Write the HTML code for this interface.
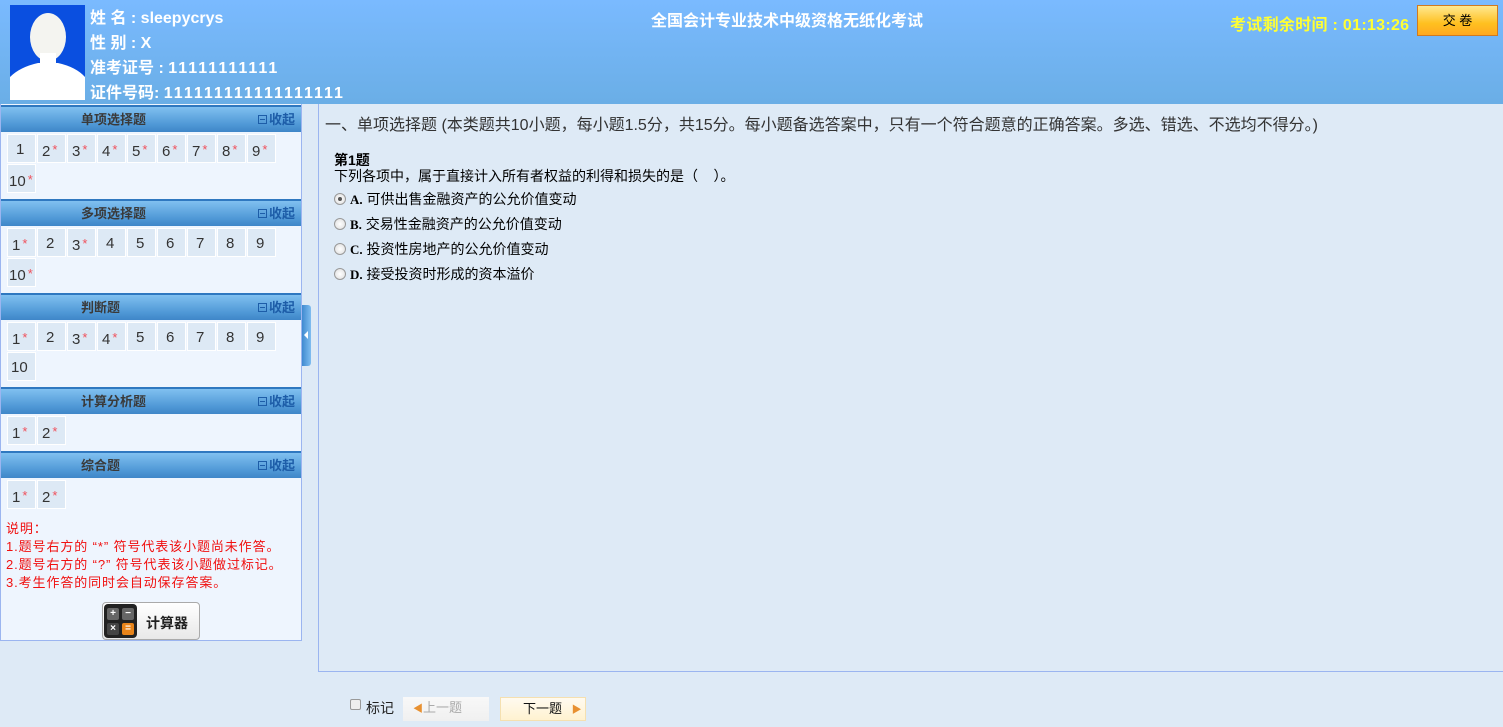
<!DOCTYPE html>
<html><head><meta charset="utf-8"><style>
*{margin:0;padding:0;box-sizing:border-box}
body{width:1503px;height:727px;overflow:hidden;background:#deeaf6;font-family:"Liberation Sans","Noto Sans CJK SC",sans-serif;position:relative;color:#333}
.hdr{position:absolute;left:0;top:0;width:1503px;height:104px;background:linear-gradient(#7abaff,#6aaee6)}
.photo{position:absolute;left:10px;top:5px;width:75px;height:95px;background:#0a4fe0;overflow:hidden}
.info{position:absolute;left:90px;color:#fff;font-weight:bold;font-size:16px;line-height:25px;top:6px}
.info .d{letter-spacing:2px}
.title{position:absolute;left:651px;top:7px;color:#fff;font-weight:bold;font-size:16px}
.timer{position:absolute;left:1230px;top:11px;color:#ffff33;font-weight:bold;font-size:16px;letter-spacing:0.3px}
.btn{position:absolute;left:1417px;top:5px;width:81px;height:31px;border:1px solid #d07a20;background:linear-gradient(#ffe890,#ffc020 60%,#ffa820);font-size:13px;text-align:center;line-height:29px;color:#000}
.left{position:absolute;left:0;top:104px;width:302px;height:537px;background:#eef5fe;border:1px solid #9bb5f0;border-top:none}
.sh{position:absolute;left:0;width:300px;height:27px;background:linear-gradient(#80c0f0,#4f98d6 70%,#3f86c8);border-top:2px solid #2f78c0;font-weight:bold;font-size:13px;color:#3a3a3a;line-height:25px}
.sh .t{position:absolute;left:80px}
.sh .c{position:absolute;right:6px;color:#1d5da8;font-size:13px}
.sh .c i{display:inline-block;width:9px;height:9px;border:1px solid #1d5da8;margin-right:2px;vertical-align:0;position:relative;font-style:normal}
.sh .c i:after{content:"";position:absolute;left:1px;top:3px;width:5px;height:1px;background:#1d5da8}
.it{position:absolute;width:29px;height:29px;background:#dde9f5;border:1px solid #fff;font-size:15px;line-height:29px;padding-left:4px;color:#333}
.it b{color:#f0505a;font-weight:normal;font-size:13px;margin-left:2px;vertical-align:2px}
.note{position:absolute;left:6px;top:520px;color:#f01010;font-size:13px;line-height:18px;letter-spacing:0.9px}
.calc{position:absolute;left:102px;top:602px;width:98px;height:38px;border:1px solid #aaa;border-radius:4px;background:linear-gradient(#fff,#e8e8e8);font-size:14px;font-weight:bold;color:#222}
.calc .k{position:absolute;left:1px;top:1px;width:33px;height:34px;background:#222;border-radius:4px}
.calc .k span{position:absolute;width:12px;height:12px;background:#666;border-radius:2px;color:#fff;font-size:10px;line-height:12px;text-align:center}
.tog{position:absolute;left:302px;top:305px;width:9px;height:61px;background:linear-gradient(90deg,#3f8ad0,#7fbdf0);border-radius:0 3px 3px 0}
.tog:after{content:"";position:absolute;left:2px;top:26px;border:4px solid transparent;border-right:4px solid #fff;border-left:none}
.main{position:absolute;left:318px;top:104px;width:1190px;height:568px;border-left:1px solid #9bb5f0;border-bottom:1px solid #9bb5f0}
.q1{position:absolute;left:6px;top:7px;font-size:16px;color:#333}
.qn{position:absolute;left:15px;top:46px;font-size:14px;font-weight:bold;color:#000}
.qt{position:absolute;left:15px;top:62px;font-size:14px;color:#000}
.op{position:absolute;left:15px;font-size:14px;color:#000}
.op .r{display:inline-block;width:12px;height:12px;border-radius:50%;border:1px solid #999;background:radial-gradient(#fff,#ddd);vertical-align:-1px;margin-right:4px;position:relative}
.op .r.s:after{content:"";position:absolute;left:3px;top:3px;width:4px;height:4px;border-radius:50%;background:#555}
.op b{font-family:"Liberation Serif",serif;font-size:13px}
.bot{position:absolute;top:696px;font-size:14px;color:#222}
</style></head><body>
<div class="hdr">
 <div class="photo"><svg width="75" height="95"><ellipse cx="38" cy="32" rx="18" ry="24" fill="#f4f4f0"/><path d="M0 95 L0 72 Q10 62 28 58 L48 58 Q66 62 75 72 L75 95Z" fill="#fff"/><rect x="30" y="48" width="16" height="14" fill="#fff"/></svg></div>
 <div class="info">姓 名 : sleepycrys<br>性 别 : X<br>准考证号 : <span class="d">11111111111</span><br>证件号码: <span class="d">111111111111111111</span></div>
 <div class="title">全国会计专业技术中级资格无纸化考试</div>
 <div class="timer">考试剩余时间 : 01:13:26</div>
 <div class="btn">交 卷</div>
</div>
<div class="left">
 <div class="sh" style="top:1px"><span class="t">单项选择题</span><span class="c"><i></i>收起</span></div>
 <div class="it" style="left:6px;top:30px;padding-left:8px">1</div>
 <div class="it" style="left:36px;top:30px">2<b>*</b></div>
 <div class="it" style="left:66px;top:30px">3<b>*</b></div>
 <div class="it" style="left:96px;top:30px">4<b>*</b></div>
 <div class="it" style="left:126px;top:30px">5<b>*</b></div>
 <div class="it" style="left:156px;top:30px">6<b>*</b></div>
 <div class="it" style="left:186px;top:30px">7<b>*</b></div>
 <div class="it" style="left:216px;top:30px">8<b>*</b></div>
 <div class="it" style="left:246px;top:30px">9<b>*</b></div>
 <div class="it" style="left:6px;top:60px;padding-left:1px">10<b>*</b></div>
 <div class="sh" style="top:95px"><span class="t">多项选择题</span><span class="c"><i></i>收起</span></div>
 <div class="it" style="left:6px;top:124px">1<b>*</b></div>
 <div class="it" style="left:36px;top:124px;padding-left:8px">2</div>
 <div class="it" style="left:66px;top:124px">3<b>*</b></div>
 <div class="it" style="left:96px;top:124px;padding-left:8px">4</div>
 <div class="it" style="left:126px;top:124px;padding-left:8px">5</div>
 <div class="it" style="left:156px;top:124px;padding-left:8px">6</div>
 <div class="it" style="left:186px;top:124px;padding-left:8px">7</div>
 <div class="it" style="left:216px;top:124px;padding-left:8px">8</div>
 <div class="it" style="left:246px;top:124px;padding-left:8px">9</div>
 <div class="it" style="left:6px;top:154px;padding-left:1px">10<b>*</b></div>
 <div class="sh" style="top:189px"><span class="t">判断题</span><span class="c"><i></i>收起</span></div>
 <div class="it" style="left:6px;top:218px">1<b>*</b></div>
 <div class="it" style="left:36px;top:218px;padding-left:8px">2</div>
 <div class="it" style="left:66px;top:218px">3<b>*</b></div>
 <div class="it" style="left:96px;top:218px">4<b>*</b></div>
 <div class="it" style="left:126px;top:218px;padding-left:8px">5</div>
 <div class="it" style="left:156px;top:218px;padding-left:8px">6</div>
 <div class="it" style="left:186px;top:218px;padding-left:8px">7</div>
 <div class="it" style="left:216px;top:218px;padding-left:8px">8</div>
 <div class="it" style="left:246px;top:218px;padding-left:8px">9</div>
 <div class="it" style="left:6px;top:248px;padding-left:3px">10</div>
 <div class="sh" style="top:283px"><span class="t">计算分析题</span><span class="c"><i></i>收起</span></div>
 <div class="it" style="left:6px;top:312px">1<b>*</b></div>
 <div class="it" style="left:36px;top:312px">2<b>*</b></div>
 <div class="sh" style="top:347px"><span class="t">综合题</span><span class="c"><i></i>收起</span></div>
 <div class="it" style="left:6px;top:376px">1<b>*</b></div>
 <div class="it" style="left:36px;top:376px">2<b>*</b></div>
</div>
<div class="note">说明：<br>1.题号右方的 “*” 符号代表该小题尚未作答。<br>2.题号右方的 “?” 符号代表该小题做过标记。<br>3.考生作答的同时会自动保存答案。</div>
<div class="calc"><div class="k"><span style="left:3px;top:4px">+</span><span style="left:18px;top:4px">−</span><span style="left:3px;top:19px;background:#444">×</span><span style="left:18px;top:19px;background:#e8841a">=</span></div><span style="position:absolute;left:43px;top:10px">计算器</span></div>
<div class="tog"></div>
<div class="main">
 <div class="q1">一、单项选择题 (本类题共10小题，每小题1.5分，共15分。每小题备选答案中，只有一个符合题意的正确答案。多选、错选、不选均不得分。)</div>
 <div class="qn">第1题</div>
 <div class="qt">下列各项中，属于直接计入所有者权益的利得和损失的是（&nbsp;&nbsp;&nbsp;&nbsp;）。</div>
 <div class="op" style="top:85px"><span class="r s"></span><b>A.</b> 可供出售金融资产的公允价值变动</div>
 <div class="op" style="top:110px"><span class="r"></span><b>B.</b> 交易性金融资产的公允价值变动</div>
 <div class="op" style="top:135px"><span class="r"></span><b>C.</b> 投资性房地产的公允价值变动</div>
 <div class="op" style="top:160px"><span class="r"></span><b>D.</b> 接受投资时形成的资本溢价</div>
</div>
<div class="bot" style="left:350px;top:699px;width:11px;height:11px;border:1px solid #999;border-radius:2px;background:#eee"></div>
<div class="bot" style="left:366px;top:698px">标记</div>
<div class="bot" style="left:403px;top:697px;width:86px;height:24px;background:linear-gradient(#f8f8f8,#f0f0f0);color:#aaa;font-size:13px;line-height:22px;padding-left:10px"><span style="color:#e89030;font-size:10px">◀</span>上一题</div>
<div class="bot" style="left:500px;top:697px;width:86px;height:24px;background:linear-gradient(#fffaf0,#fff2d0);border:1px solid #f5e0b0;font-size:13px;line-height:22px;padding-left:22px;color:#111">下一题 <span style="color:#e89030;font-size:10px;margin-left:6px">▶</span></div>
</body></html>
